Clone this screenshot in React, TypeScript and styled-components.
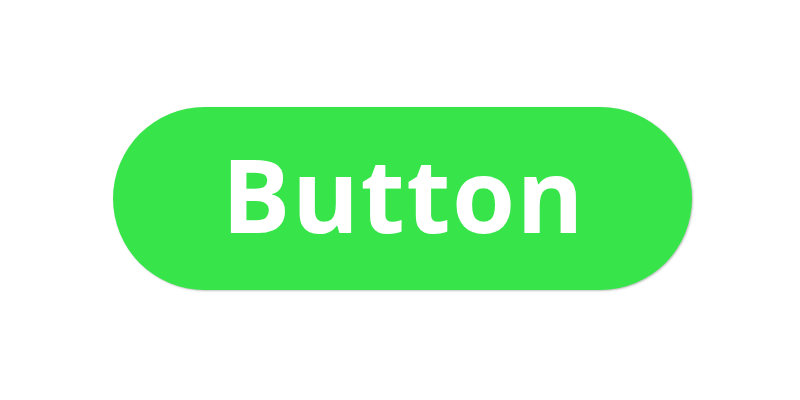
import React, { FC } from "react";
import styled, { createGlobalStyle } from "styled-components";

const GlobalStyle = createGlobalStyle`
  html, body {
    margin: 0;
    padding: 0;
    background: #ffffff;
  }
  #root {
    height: 100vh;
  }
`;

const Stage = styled.div`
  height: 100vh;
  display: flex;
  align-items: center;
  justify-content: center;
  padding-left: 5px;
  padding-bottom: 3px;
  box-sizing: border-box;
`;

const PillButton = styled.button`
  width: 579px;
  height: 183px;
  border: none;
  border-radius: 92px;
  background: #37e54b;
  box-shadow: 1px 1px 2px rgba(120, 120, 120, 0.45);
  color: #ffffff;
  font-family: "Open Sans", Lato, sans-serif;
  font-weight: 700;
  font-size: 102px;
  letter-spacing: 1.5px;
  display: flex;
  align-items: center;
  justify-content: center;
  padding: 0 0 10px 2px;
  cursor: pointer;
`;

const App: FC = () => {
  return (
    <>
      <GlobalStyle />
      <Stage>
        <PillButton>Button</PillButton>
      </Stage>
    </>
  );
};

export default App;
